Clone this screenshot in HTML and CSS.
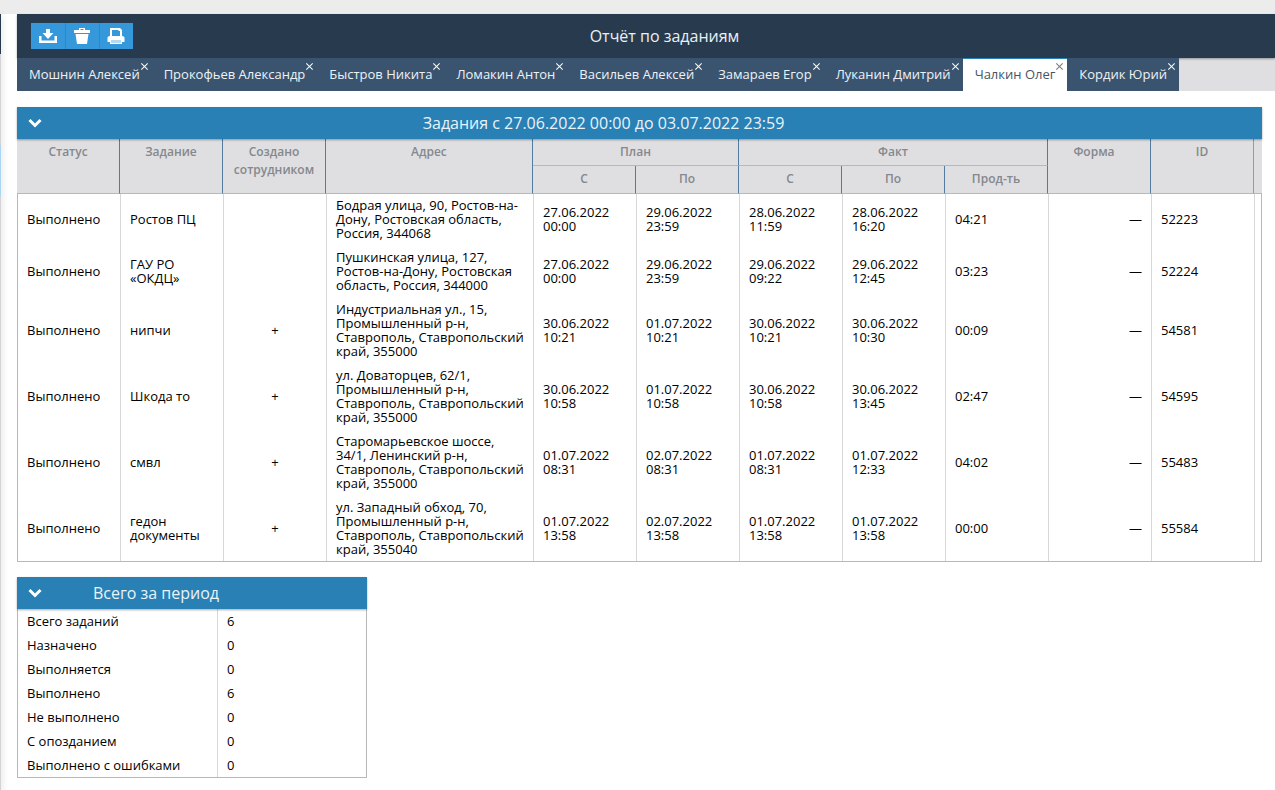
FILE: index.html
```
<!DOCTYPE html>
<html lang="ru">
<head>
<meta charset="utf-8">
<meta name="viewport" content="width=device-width, initial-scale=1">
<title>Отчёт по заданиям</title>
<link rel="stylesheet" href="styles.css">
</head>
<body>
<div class="topline"></div>
<div class="shell">
  <aside class="edge"><div class="edge-head"></div><div class="edge-body"></div><div class="edge-active"></div><div class="edge-rest"></div></aside>
  <main class="report">
    <header class="toolbar">
      <div class="actions">
        <button class="action" type="button" aria-label="Скачать"><svg viewBox="0 0 18 16"><path d="M7 1h4v4h3.500L9 11 3.500 5H7z"/><path d="M0 8h2.500v4.500h13V8H18v7H0z"/></svg></button>
        <button class="action" type="button" aria-label="Удалить"><svg viewBox="0 0 18 16"><path fill-rule="evenodd" d="M6 0h6v2h5v3H1V2h5zM7.500 1v1h3V1zM2.500 6h13L14 16H4z"/></svg></button>
        <button class="action" type="button" aria-label="Печать"><svg viewBox="0 0 18 16"><path fill-rule="evenodd" d="M3 0h10l2 2v6h-2V3h-1.500V2H5v6H3z"/><path d="M3 8h12c2 0 2.500 1 2.500 2v4H15v2H3v-2H.5v-4C.5 9 1 8 3 8z"/><path class="tray" d="M4 12h10v3H4z"/></svg></button>
      </div>
      <h1 class="title">Отчёт по заданиям</h1>
    </header>
    <nav class="tabs">
      <button class="tab" type="button">Мошнин Алексей<span class="close"></span></button>
      <button class="tab" type="button">Прокофьев Александр<span class="close"></span></button>
      <button class="tab" type="button">Быстров Никита<span class="close"></span></button>
      <button class="tab" type="button">Ломакин Антон<span class="close"></span></button>
      <button class="tab" type="button">Васильев Алексей<span class="close"></span></button>
      <button class="tab" type="button">Замараев Егор<span class="close"></span></button>
      <button class="tab" type="button">Луканин Дмитрий<span class="close"></span></button>
      <button class="tab tab-active" type="button">Чалкин Олег<span class="close"></span></button>
      <button class="tab" type="button">Кордик Юрий<span class="close"></span></button>
    </nav>
    <div class="panels">
      <section class="panel">
        <div class="panel-head">
          <button class="toggle" type="button" aria-label="Свернуть"><svg viewBox="0 0 14 10"><path d="M1.500 2 7 7.500 12.500 2"/></svg></button>
          <h2 class="panel-title">Задания с 27.06.2022 00:00 до 03.07.2022 23:59</h2>
        </div>
        <table class="grid tasks">
          <colgroup><col class="c"><col class="c"><col class="c"><col><col class="c"><col class="c"><col class="c"><col class="c"><col class="c"><col class="c"><col class="c"><col class="gutter"></colgroup>
          <thead>
            <tr><th rowspan="2">Статус</th><th rowspan="2">Задание</th><th rowspan="2">Создано сотрудником</th><th rowspan="2">Адрес</th><th class="group" colspan="2">План</th><th class="group" colspan="3">Факт</th><th class="form" rowspan="2">Форма</th><th class="last" rowspan="2">ID</th><th class="blank" rowspan="2"></th></tr>
            <tr><th>С</th><th>По</th><th>С</th><th>По</th><th>Прод-ть</th></tr>
          </thead>
          <tbody>
            <tr><td>Выполнено</td><td>Ростов ПЦ</td><td class="mark"></td><td>Бодрая улица, 90, Ростов-на-Дону, Ростовская область, Россия, 344068</td><td>27.06.2022 00:00</td><td>29.06.2022 23:59</td><td>28.06.2022 11:59</td><td>28.06.2022 16:20</td><td>04:21</td><td class="form">—</td><td>52223</td><td class="blank"></td></tr>
            <tr><td>Выполнено</td><td>ГАУ РО «ОКДЦ»</td><td class="mark"></td><td>Пушкинская улица, 127, Ростов-на-Дону, Ростовская область, Россия, 344000</td><td>27.06.2022 00:00</td><td>29.06.2022 23:59</td><td>29.06.2022 09:22</td><td>29.06.2022 12:45</td><td>03:23</td><td class="form">—</td><td>52224</td><td class="blank"></td></tr>
            <tr><td>Выполнено</td><td>нипчи</td><td class="mark">+</td><td>Индустриальная ул., 15, Промышленный р-н, Ставрополь, Ставропольский край, 355000</td><td>30.06.2022 10:21</td><td>01.07.2022 10:21</td><td>30.06.2022 10:21</td><td>30.06.2022 10:30</td><td>00:09</td><td class="form">—</td><td>54581</td><td class="blank"></td></tr>
            <tr><td>Выполнено</td><td>Шкода то</td><td class="mark">+</td><td>ул. Доваторцев, 62/1, Промышленный р-н, Ставрополь, Ставропольский край, 355000</td><td>30.06.2022 10:58</td><td>01.07.2022 10:58</td><td>30.06.2022 10:58</td><td>30.06.2022 13:45</td><td>02:47</td><td class="form">—</td><td>54595</td><td class="blank"></td></tr>
            <tr><td>Выполнено</td><td>смвл</td><td class="mark">+</td><td>Старомарьевское шоссе, 34/1, Ленинский р-н, Ставрополь, Ставропольский край, 355000</td><td>01.07.2022 08:31</td><td>02.07.2022 08:31</td><td>01.07.2022 08:31</td><td>01.07.2022 12:33</td><td>04:02</td><td class="form">—</td><td>55483</td><td class="blank"></td></tr>
            <tr><td>Выполнено</td><td>гедон документы</td><td class="mark">+</td><td>ул. Западный обход, 70, Промышленный р-н, Ставрополь, Ставропольский край, 355040</td><td>01.07.2022 13:58</td><td>02.07.2022 13:58</td><td>01.07.2022 13:58</td><td>01.07.2022 13:58</td><td>00:00</td><td class="form">—</td><td>55584</td><td class="blank"></td></tr>
          </tbody>
        </table>
      </section>
      <section class="panel panel-small">
        <div class="panel-head">
          <button class="toggle" type="button" aria-label="Свернуть"><svg viewBox="0 0 14 10"><path d="M1.500 2 7 7.500 12.500 2"/></svg></button>
          <h2 class="panel-title">Всего за период</h2>
        </div>
        <table class="grid totals">
          <tbody>
            <tr><td>Всего заданий</td><td>6</td></tr>
            <tr><td>Назначено</td><td>0</td></tr>
            <tr><td>Выполняется</td><td>0</td></tr>
            <tr><td>Выполнено</td><td>6</td></tr>
            <tr><td>Не выполнено</td><td>0</td></tr>
            <tr><td>С опозданием</td><td>0</td></tr>
            <tr><td>Выполнено с ошибками</td><td>0</td></tr>
          </tbody>
        </table>
      </section>
    </div>
  </main>
</div>
</body>
</html>
```
FILE: styles.css
```
* { box-sizing: border-box; }
body {
  margin: 0;
  min-height: 100vh;
  display: flex;
  flex-direction: column;
  background: #fff;
  color: #000;
  font: 13px/14px "Open Sans", "Noto Sans", sans-serif;
}
button { font: inherit; border: 0; padding: 0; background: none; cursor: pointer; }
.topline { height: 14px; background: #ececec; }
.shell { flex: 1; display: flex; gap: 16px; }
.edge {
  width: 1px;
  display: flex;
  flex-direction: column;
  background: #d4d4d6;
  box-shadow: 0 2px 6px rgba(0, 0, 0, .45);
}
.edge-head { height: 40px; background: #283b4e; }
.edge-body { height: 91px; }
.edge-active { height: 51px; background: #a9d6f5; }
.report { flex: 1; min-width: 1100px; }
.toolbar {
  display: flex;
  align-items: center;
  height: 44px;
  padding: 0 79px 0 14px;
  background: #283b4e;
  box-shadow: 0 1px 2px rgba(0, 0, 0, .35);
  position: relative;
}
.actions { display: flex; }
.action {
  width: 34px;
  height: 26px;
  display: grid;
  place-items: center;
  background: #3498db;
}
.action + .action { box-shadow: inset 1px 0 #2d87c8; }
.action svg { width: 18px; height: 16px; fill: #fff; }
.action .tray { fill: #b5d9f2; }
.title { flex: 1; margin: 0; color: #e8f0f6; font-size: 16px; line-height: 24px; font-weight: 500; text-align: center; }
.tabs { display: flex; height: 33px; background: #dfdfe1; }
.tab {
  position: relative;
  padding: 0 12px 2px;
  background: #3a546f;
  color: #edf2f6;
  font-weight: 500;
  white-space: nowrap;
}
.tab-active { background: #fff; color: #475466; font-weight: 400; border-top: 1px solid #2980b9; z-index: 1; }
.close { position: absolute; right: 4px; top: 4px; width: 8px; height: 8px; color: #fff; }
.close::before, .close::after {
  content: "";
  position: absolute;
  left: 0;
  top: 4px;
  width: 9px;
  height: 1px;
  background: currentColor;
  transform: rotate(45deg);
}
.close::after { transform: rotate(-45deg); }
.tab-active .close { color: #777; top: 3px; }
.panels { display: flex; flex-direction: column; gap: 15px; padding: 16px 13px 12px 0; }
.panel-small { width: 350px; }
.panel-head {
  display: flex;
  align-items: center;
  height: 32px;
  padding: 0 98px 0 10px;
  background: #2980b4;
  box-shadow: 0 1px 2px rgba(0, 0, 0, .35);
  position: relative;
}
.toggle { width: 16px; height: 16px; display: grid; place-items: center; }
.toggle svg { width: 14px; height: 10px; fill: none; stroke: #fff; stroke-width: 3; }
.panel-title { flex: 1; margin: 0; color: #e8f3fa; font-size: 16px; line-height: 24px; font-weight: 400; text-align: center; white-space: nowrap; }
.grid { width: 100%; table-layout: fixed; border-collapse: separate; border-spacing: 0; border-bottom: 1px solid #b8b8b8; }
.grid td { padding: 5px 9px; border-left: 1px solid #d8d8d8; }
.grid td:first-child { border-left-color: #b8b8b8; }
.tasks tbody tr:first-child td { padding-top: 4px; }
.c { width: 103px; }
.gutter { width: 8px; }
th {
  padding: 4px 9px;
  background: #dfdfe2;
  color: #85888c;
  border-right: 1px solid #547ca1;
  border-bottom: 1px solid #b8b8b8;
  font-size: 12px;
  line-height: 18px;
  font-weight: 600;
  vertical-align: top;
}
thead tr { height: 27px; }
thead tr + tr { height: 28px; }
th.form { padding-right: 19px; }
th.last { border-right-color: #999; }
.grid th.blank { border-right: 0; padding: 0; }
.grid td.blank { padding: 0; border-right: 1px solid #b8b8b8; }
.grid td.mark { text-align: center; }
.grid td.form { text-align: right; }
.totals td:first-child { width: 200px; }
.totals td:last-child { border-right: 1px solid #b8b8b8; }
```
